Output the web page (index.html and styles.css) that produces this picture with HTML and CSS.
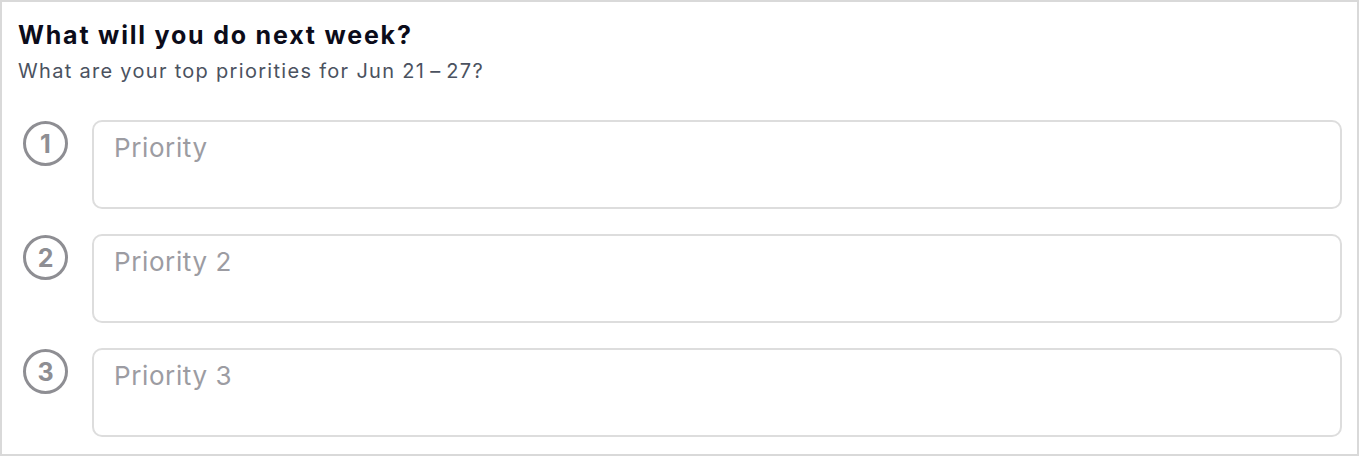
FILE: index.html
```html
<!DOCTYPE html>
<html lang="en">
<head>
    <meta charset="UTF-8">
    <meta name="viewport" content="width=device-width, initial-scale=1.0">
    <title>Weekly Priorities</title>
    <link rel="stylesheet" href="styles.css">
</head>
<body>
    <div class="card">
        <div class="title">What will you do next week?</div>
        <div class="subtitle">What are your top priorities for Jun 21&thinsp;&ndash;&thinsp;27?</div>
        <div class="priorities">
            <div class="row">
                <div class="num">1</div>
                <textarea class="field" placeholder="Priority"></textarea>
            </div>
            <div class="row">
                <div class="num">2</div>
                <textarea class="field" placeholder="Priority 2"></textarea>
            </div>
            <div class="row">
                <div class="num">3</div>
                <textarea class="field" placeholder="Priority 3"></textarea>
            </div>
        </div>
    </div>
</body>
</html>
```

FILE: styles.css
```css
body {
    margin: 0;
    background-color: #fff;
    font-family: 'Inter', 'Noto Sans', sans-serif;
}
.card {
    box-sizing: border-box;
    width: 1359px;
    height: 456px;
    border: 2px solid #d9d9d9;
    padding: 18px 15px 0 16px;
}
.title {
    font-size: 25px;
    line-height: 30px;
    font-weight: 700;
    letter-spacing: 1.8px;
    color: #0c0c1a;
}
.subtitle {
    margin-top: 9px;
    font-size: 20px;
    line-height: 24px;
    letter-spacing: 1.3px;
    color: #4b5260;
}
.priorities {
    margin-top: 37px;
    display: flex;
    flex-direction: column;
    gap: 25px;
}
.row {
    display: flex;
    align-items: flex-start;
    gap: 24px;
}
.num {
    box-sizing: border-box;
    flex: none;
    width: 45px;
    height: 45px;
    margin: 1px 0 0 5px;
    border: 3px solid #8e8e93;
    border-radius: 50%;
    display: flex;
    align-items: center;
    justify-content: center;
    font-size: 25px;
    font-weight: 700;
    color: #8e8e93;
}
.field {
    box-sizing: border-box;
    flex: 1;
    height: 89px;
    margin: 0;
    padding: 10px 20px;
    border: 2px solid #dddddd;
    border-radius: 10px;
    resize: none;
    outline: none;
    font-family: 'Inter', 'Noto Sans', sans-serif;
    font-size: 26px;
    line-height: 32px;
    letter-spacing: 0.6px;
    color: #333;
}
.field::placeholder {
    color: #9c9ca2;
}
```
